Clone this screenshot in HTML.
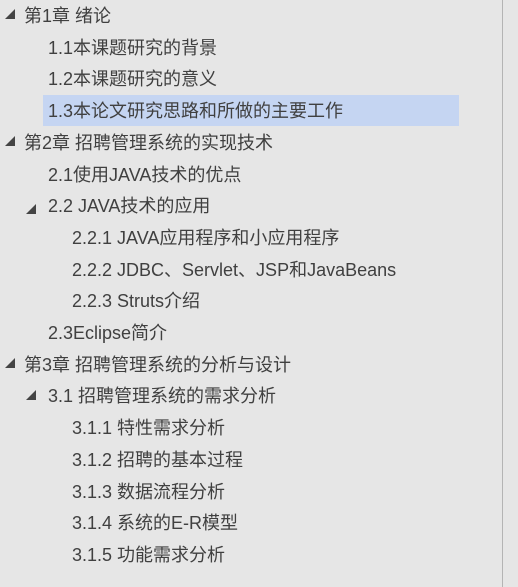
<!DOCTYPE html>
<html><head><meta charset="utf-8"><style>
html,body{margin:0;padding:0;}
body{width:518px;height:587px;background:#e6e6e6;position:relative;overflow:hidden;font-family:"Liberation Sans","Noto Sans CJK SC",sans-serif;color:#404040;font-size:18px;}
.vl{position:absolute;left:502px;top:0;width:1px;height:587px;background:#b4b4b4;}
.r{position:absolute;height:31.7px;line-height:33px;white-space:nowrap;}
.sel{position:absolute;left:43px;top:95px;width:416px;height:31px;background:#c5d5f2;}
.t{position:absolute;width:0;height:0;border-left:10px solid transparent;border-bottom:10px solid #444;}
</style></head><body>
<div class="vl"></div>
<div class="sel"></div>
<div class="t" style="left:5px;top:9px"></div>
<div class="r" style="left:24px;top:0px">第1章 绪论</div>
<div class="r" style="left:48px;top:31.7px">1.1本课题研究的背景</div>
<div class="r" style="left:48px;top:63.4px">1.2本课题研究的意义</div>
<div class="r" style="left:48px;top:95.1px">1.3本论文研究思路和所做的主要工作</div>
<div class="t" style="left:5px;top:136px"></div>
<div class="r" style="left:24px;top:126.8px">第2章 招聘管理系统的实现技术</div>
<div class="r" style="left:48px;top:158.5px">2.1使用JAVA技术的优点</div>
<div class="t" style="left:26px;top:204px"></div>
<div class="r" style="left:48px;top:190.2px">2.2 JAVA技术的应用</div>
<div class="r" style="left:72px;top:221.9px">2.2.1 JAVA应用程序和小应用程序</div>
<div class="r" style="left:72px;top:253.6px">2.2.2 JDBC、Servlet、JSP和JavaBeans</div>
<div class="r" style="left:72px;top:285.3px">2.2.3 Struts介绍</div>
<div class="r" style="left:48px;top:317px">2.3Eclipse简介</div>
<div class="t" style="left:5px;top:358px"></div>
<div class="r" style="left:24px;top:348.7px">第3章 招聘管理系统的分析与设计</div>
<div class="t" style="left:26px;top:390px"></div>
<div class="r" style="left:48px;top:380.4px">3.1 招聘管理系统的需求分析</div>
<div class="r" style="left:72px;top:412.1px">3.1.1 特性需求分析</div>
<div class="r" style="left:72px;top:443.8px">3.1.2 招聘的基本过程</div>
<div class="r" style="left:72px;top:475.5px">3.1.3 数据流程分析</div>
<div class="r" style="left:72px;top:507.2px">3.1.4 系统的E-R模型</div>
<div class="r" style="left:72px;top:538.9px">3.1.5 功能需求分析</div>
</body></html>
